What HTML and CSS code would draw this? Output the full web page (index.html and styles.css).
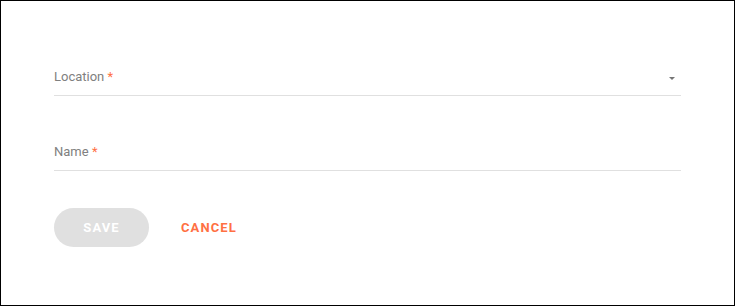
FILE: index.html
```html
<!DOCTYPE html>
<html lang="en">
<head>
<meta charset="utf-8">
<title>Form</title>
<link rel="stylesheet" href="styles.css">
</head>
<body>
<div class="frame">
  <form class="form">
    <div class="field field-select">
      <span class="label">Location <span class="req">*</span></span>
      <span class="arrow"></span>
    </div>
    <div class="field field-text">
      <span class="label">Name <span class="req">*</span></span>
    </div>
    <div class="actions">
      <button type="button" class="btn btn-save" disabled>SAVE</button>
      <button type="button" class="btn btn-cancel">CANCEL</button>
    </div>
  </form>
</div>
</body>
</html>
```
FILE: styles.css
```css
html, body {
  margin: 0;
  padding: 0;
  background: #ffffff;
}
.frame {
  width: 735px;
  height: 306px;
  box-sizing: border-box;
  border: 1px solid #000000;
  padding: 68px 53px 0 53px;
  font-family: Roboto, "Liberation Sans", sans-serif;
}
.form {
  display: flex;
  flex-direction: column;
}
.field {
  display: flex;
  align-items: center;
  padding-bottom: 10px;
  border-bottom: 1px solid #e0e0e0;
}
.field-text {
  margin-top: 48px;
}
.label {
  flex: 1;
  font-size: 13px;
  line-height: 16px;
  color: #808080;
}
.req {
  color: #ff7043;
}
.arrow {
  width: 0;
  height: 0;
  border-left: 3.5px solid transparent;
  border-right: 3.5px solid transparent;
  border-top: 3.5px solid #757575;
  margin-right: 6px;
  margin-top: 2px;
}
.actions {
  display: flex;
  align-items: center;
  margin-top: 37px;
  gap: 16px;
}
.btn {
  font-family: Roboto, "Liberation Sans", sans-serif;
  font-size: 13px;
  font-weight: 700;
  letter-spacing: 1.1px;
  border: none;
  cursor: pointer;
  padding: 0;
}
.btn-save {
  width: 95px;
  height: 39px;
  border-radius: 20px;
  background: #e0e0e0;
  color: #ffffff;
}
.btn-cancel {
  background: transparent;
  color: #ff7043;
  height: 39px;
  padding: 0 16px;
}
```
